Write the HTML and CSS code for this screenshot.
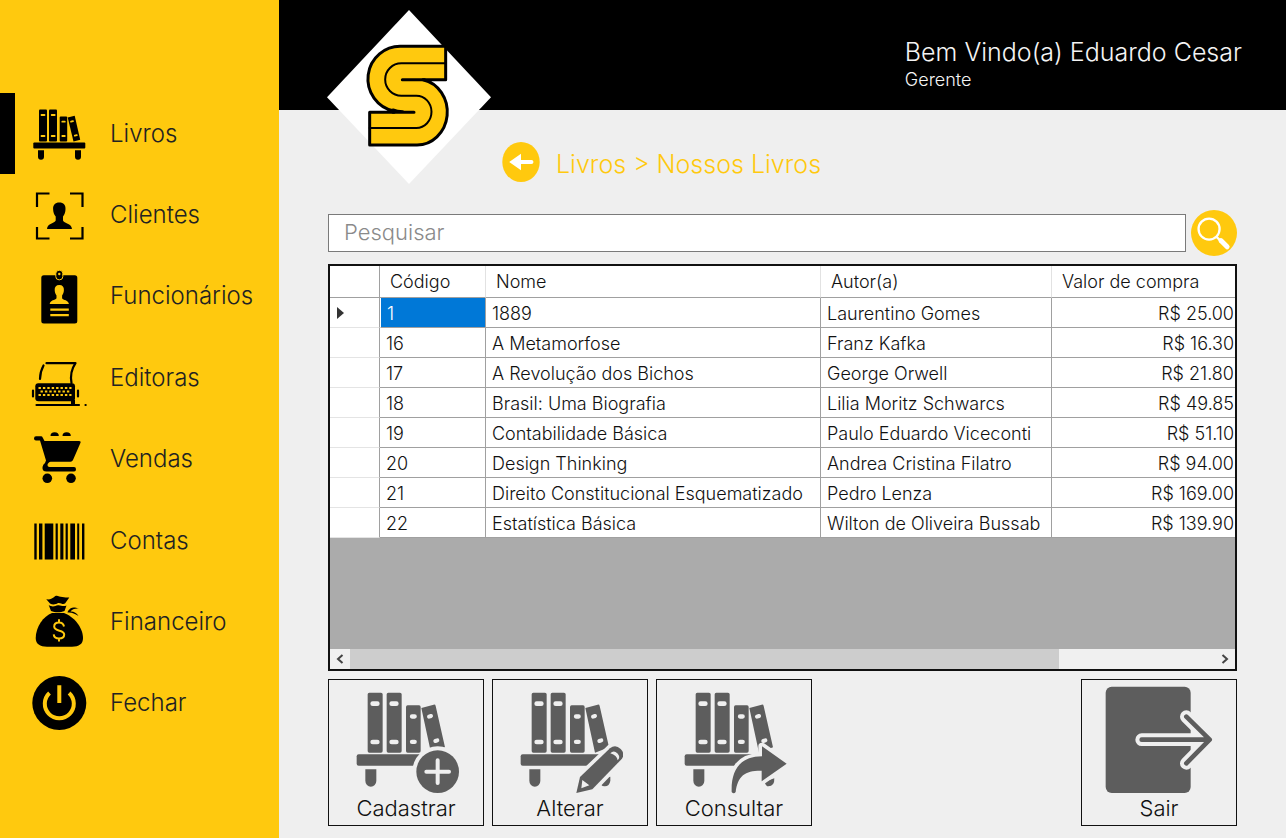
FILE: index.html
```html
<!DOCTYPE html>
<html lang="pt-BR">
<head>
<meta charset="utf-8">
<title>Nossos Livros</title>
<meta name="viewport" content="width=device-width, initial-scale=1">
<link rel="stylesheet" href="styles.css">
</head>
<body>
<svg class="defs" width="0" height="0" aria-hidden="true">
  <defs>
    <g id="big-books">
      <path fill-rule="evenodd" d="M147 158h35q5 0 5 5v170q0 5-5 5h-35q-5 0-5-5V163q0-5 5-5zm10 26a7 7 0 0 0 0 14h14a7 7 0 0 0 0-14zm0 115a7 7 0 0 0 0 14h14a7 7 0 0 0 0-14z"/>
      <path fill-rule="evenodd" d="M204 158h35q5 0 5 5v170q0 5-5 5h-35q-5 0-5-5V163q0-5 5-5zm10 26a7 7 0 0 0 0 14h14a7 7 0 0 0 0-14zm0 115a7 7 0 0 0 0 14h14a7 7 0 0 0 0-14z"/>
      <path fill-rule="evenodd" d="M262 196h34q5 0 5 5v132q0 5-5 5h-34q-5 0-5-5V201q0-5 5-5zm13 27a6 6 0 0 0 0 13h8a6 6 0 0 0 0-13zm0 76a6 6 0 0 0 0 13h8a6 6 0 0 0 0-13z"/>
      <path d="M303 204l37-10q5-1 6 4l28 124-42 16z"/>
      <path class="cut-line" d="M326 230l6-2M345 303l6-2"/>
    </g>
    <g id="big-leg"><path d="M135 388h33v34a16 18 0 0 1-33 0z"/></g>
  </defs>
</svg>
<div class="app">
  <aside class="sidebar">
    <nav class="menu" aria-label="Menu principal">
      <a class="item active" href="#livros">
        <svg class="icon" viewBox="0 0 56 56" aria-hidden="true">
          <rect x="7" y="3.500" width="8" height="32" rx="1"/><rect x="17" y="3.500" width="8" height="32" rx="1"/><rect x="27.700" y="10.500" width="7.500" height="25" rx="1"/>
          <path d="M35.700 11.600l7-1.800L48.200 33.800l-6.700 1.800z"/>
          <path class="hole" d="M9.500 9h3M9.500 30h3M19.700 9h3M19.700 30h3M30.300 15.700h2.500M30.300 30h2.500M39 15.700l2-.5M42.800 29.700l2-.5"/>
          <rect x="1.300" y="36.600" width="52" height="6" rx="1"/>
          <path d="M6 44.300h6v6.500a3 3 0 0 1-6 0zM43 44.300h6v6.500a3 3 0 0 1-6 0z"/>
        </svg><span>Livros</span></a>
      <a class="item" href="#clientes">
        <svg class="icon" viewBox="0 0 56 56" aria-hidden="true">
          <path class="line" d="M17.500 6.500H5v13.500M38 6.500h12.500v13.500M17.500 51.500H5V40M38 51.500h12.500V40"/>
          <path d="M27.300 15.500c4.300 0 6.400 2.500 6.200 6.500 0 3-1 5.500-2.500 7.500v4c1 3 8.500 2.500 9 8.500H15c.5-6 7.500-5.500 8.700-8.500v-4c-1.700-2-2.500-4.500-2.600-7.500-.1-4 2-6.500 6.200-6.500z"/>
        </svg><span>Clientes</span></a>
      <a class="item" href="#funcionarios">
        <svg class="icon" viewBox="0 0 56 56" aria-hidden="true">
          <rect x="9.300" y="7.300" width="36" height="48.300" rx="2.500"/>
          <rect class="badge" x="23.800" y="2.300" width="7" height="9.500" rx="3.200"/><circle class="dot-hole" cx="27.300" cy="6" r="1.200"/>
          <path class="cut" d="M27.300 17c3.300 0 4.800 2 4.600 5 0 2-.7 4-1.800 5.500v2.800c1 2 6.400 1.700 6.800 5.700H17.700c.4-4 5.600-3.700 6.800-5.700v-2.800c-1.100-1.500-1.800-3.500-1.800-5.500-.2-3 1.300-5 4.600-5z"/>
          <path class="cut" d="M18.300 40.500h18.500v2.200H18.300zM18.300 46h18.500v2.200H18.300z"/>
        </svg><span>Funcionários</span></a>
      <a class="item" href="#editoras">
        <svg class="icon" viewBox="0 0 56 56" aria-hidden="true">
          <path class="line round" d="M14.500 13.200H43.500Q37.500 22 39.500 33M11.500 15.500Q8 22 8 29M4.500 55H47M53.500 55h.2M1 40.500v6M46 40.500v6"/>
          <rect x="3.300" y="33.200" width="39.700" height="18" rx="3"/><path d="M39 50h4v5h-4z"/>
          <path class="keys" d="M6.500 38h33M6.500 45h33"/><path class="keys" d="M8.500 41.500h30"/>
        </svg><span>Editoras</span></a>
      <a class="item" href="#vendas">
        <svg class="icon" viewBox="0 0 56 56" aria-hidden="true">
          <path d="M18.500 5a4 3.500 0 0 1 8.300 0zM30.500 5a4 3.500 0 0 1 8.300 0z"/>
          <path d="M4 5.300h5q1.200 0 1.800 1.400L12.500 10H47q2.300 0 1.400 2L41 29q-.7 1.700-2.500 1.700H18.500q-3 1-3 3.500 0 1.800 2 1.800H42q2 0 2 2.300T42 40.500H14.500q-4.500 0-4-4.500.4-2.300 2.500-4l1-2.500-6-20H4q-2 0-2-2.100t2-2.100z"/>
          <circle cx="15.300" cy="47.300" r="4.800"/><circle cx="39" cy="47.300" r="4.800"/>
        </svg><span>Vendas</span></a>
      <a class="item" href="#contas">
        <svg class="icon" viewBox="0 0 56 56" aria-hidden="true">
          <path d="M2.300 10.400h2.400v36H2.300zM7 10.400h3.400v36H7zM12.700 10.400h8.600v36h-8.600zM23.600 10.400h2.200v36h-2.200zM28.300 10.400h3.100v36h-3.100zM33.600 10.400h2.200v36h-2.200zM38.300 10.400h4.700v36h-4.700zM45.200 10.400h2v36h-2zM50 10.400h2.400v36H50z"/>
        </svg><span>Contas</span></a>
      <a class="item" href="#financeiro">
        <svg class="icon" viewBox="0 0 56 56" aria-hidden="true">
          <path d="M20 19h12c9 3 19 14 19 25 0 6-4 8.700-11 8.700H15C8 52.700 3.700 50 3.700 44 3.700 33 11.500 22 20 19z"/>
          <path d="M14.300 5.300c4 .5 6-.7 9-3.300 2.500-1 4 1 7 1 2.500.5 4 .5 7 .5L33 9.500c-2.500 1.500-4-1-7-.5-3 2-6 1.500-8 .5z"/>
          <path d="M16.700 11c4 2.500 6 1 9.300.3 2.500-.5 5 1.700 8.500.2L32.500 17c-4 1.800-9.500 1.800-13.500 0z"/>
          <path d="M36 17c3-4.500 6-4 11-2.500-4-.3-7 .5-8.500 3 3.500-.2 6 1.500 8 4.500-4-2.500-7-4-11-3.500z"/>
          <path class="dollar" d="M32 32.500c-.5-2.500-2-4-5-4s-4.800 1.500-4.800 4c0 5.500 10 3 10 8 0 2.500-2 4-5.200 4s-5-1.700-5.300-4.200M27 25.300v3M27 44.500v3"/>
        </svg><span>Financeiro</span></a>
      <a class="item" href="#fechar">
        <svg class="icon" viewBox="0 0 56 56" aria-hidden="true">
          <circle cx="27.300" cy="28" r="27"/>
          <path class="power" d="M17.500 18a14.500 14.500 0 1 0 19.600 0M27.300 10.300V28"/>
        </svg><span>Fechar</span></a>
    </nav>
  </aside>

  <div class="main">
    <header class="top">
      <svg class="logo" viewBox="52 28 492 522" role="img" aria-label="Logotipo">
        <path fill="#fff" d="M298 28l246 262-246 260L52 290z"/>
        <path class="mark" d="M408 137H277A97 98 0 0 0 253 331L253 335H180V433H320A91 99 0 0 0 340 237H408Z"/>
        <path class="mark bare" d="M278 237H345M313 335H250M250 328Q262 333 280 333"/>
        <path class="mark thin" d="M408 188H275A48 48 0 0 0 275 285H320A45 48 0 0 1 320 382H180"/>
      </svg>
      <div class="welcome">
        <p class="name">Bem Vindo(a) Eduardo Cesar</p>
        <p class="role">Gerente</p>
      </div>
    </header>

    <main class="content">
      <div class="heading">
        <button class="round-btn" type="button" aria-label="Voltar">
          <svg class="back" viewBox="576 426 114 122" aria-hidden="true">
            <ellipse fill="#ffc90e" cx="633" cy="487" rx="57" ry="61"/>
            <path fill="#fff" d="M597 487l36-25v19h32q6 0 6 6t-6 6h-32v19z"/>
          </svg>
        </button>
        <h1>Livros &gt; Nossos Livros</h1>
      </div>

      <form class="search">
        <input type="search" placeholder="Pesquisar" aria-label="Pesquisar">
        <button class="round-btn" type="button" aria-label="Buscar">
          <svg class="find" viewBox="513 29 140 140" aria-hidden="true">
            <circle fill="#ffc90e" cx="583" cy="99" r="70"/>
            <circle fill="none" stroke="#fff" stroke-width="7" cx="568" cy="87" r="32"/>
            <path stroke="#fff" stroke-width="7" d="M590 110l12 12"/>
            <path stroke="#fff" stroke-width="15" stroke-linecap="round" d="M604 122l19 19"/>
          </svg>
        </button>
      </form>

      <section class="grid" aria-label="Livros cadastrados">
        <div class="view">
          <table>
            <colgroup><col class="c-mark"><col class="c-code"><col class="c-name"><col class="c-author"><col></colgroup>
            <thead><tr><th></th><th scope="col">Código</th><th scope="col">Nome</th><th scope="col">Autor(a)</th><th scope="col">Valor de compra</th></tr></thead>
            <tbody>
              <tr><td class="mark-cell"><svg class="pointer" viewBox="0 0 7 12" aria-label="Linha atual"><path d="M0 0l7 6-7 6z"/></svg></td><td class="selected">1</td><td>1889</td><td>Laurentino Gomes</td><td class="money">R$ 25.00</td></tr>
              <tr><td class="mark-cell"></td><td>16</td><td>A Metamorfose</td><td>Franz Kafka</td><td class="money">R$ 16.30</td></tr>
              <tr><td class="mark-cell"></td><td>17</td><td>A Revolução dos Bichos</td><td>George Orwell</td><td class="money">R$ 21.80</td></tr>
              <tr><td class="mark-cell"></td><td>18</td><td>Brasil: Uma Biografia</td><td>Lilia Moritz Schwarcs</td><td class="money">R$ 49.85</td></tr>
              <tr><td class="mark-cell"></td><td>19</td><td>Contabilidade Básica</td><td>Paulo Eduardo Viceconti</td><td class="money">R$ 51.10</td></tr>
              <tr><td class="mark-cell"></td><td>20</td><td>Design Thinking</td><td>Andrea Cristina Filatro</td><td class="money">R$ 94.00</td></tr>
              <tr><td class="mark-cell"></td><td>21</td><td>Direito Constitucional Esquematizado</td><td>Pedro Lenza</td><td class="money">R$ 169.00</td></tr>
              <tr><td class="mark-cell"></td><td>22</td><td>Estatística Básica</td><td>Wilton de Oliveira Bussab</td><td class="money">R$ 139.90</td></tr>
            </tbody>
          </table>
        </div>
        <div class="scroll">
          <button type="button" aria-label="Rolar para a esquerda"><svg viewBox="0 0 8 10" aria-hidden="true"><path d="M6.500 1L2 5l4.500 4"/></svg></button>
          <div class="track"><div class="thumb"></div></div>
          <button type="button" aria-label="Rolar para a direita"><svg viewBox="0 0 8 10" aria-hidden="true"><path d="M1.500 1L6 5 1.500 9"/></svg></button>
        </div>
      </section>

      <div class="actions">
        <button class="action" type="button">
          <svg class="art" viewBox="98 156 318 306" aria-hidden="true">
            <use href="#big-books"/><use href="#big-leg"/>
            <rect x="109" y="343" width="230" height="34" rx="6"/>
            <circle class="gap" cx="352" cy="395" r="76"/><circle cx="352" cy="395" r="64"/>
            <path class="cut-line" d="M352 361v68M318 395h68"/>
          </svg>Cadastrar</button>
        <button class="action" type="button">
          <svg class="art" viewBox="98 156 318 306" aria-hidden="true">
            <use href="#big-books"/><use href="#big-leg"/>
            <rect x="109" y="343" width="240" height="34" rx="6"/>
            <path d="M348 410h30v12q-3 18-18 17-12-2-12-14z"/>
            <path class="gap outline" d="M276 459l11-48 90-86q16-14 32 2t1 32l-86 89z"/>
            <path d="M276 459l11-48 90-86q16-14 32 2t1 32l-86 89z"/>
            <path class="gap" d="M378 340q10-11 21 0t1 21q-2-15-22-21zM294 420l21 16-24 9z"/>
          </svg>Alterar</button>
        <button class="action" type="button">
          <svg class="art" viewBox="98 156 318 306" aria-hidden="true">
            <use href="#big-books"/><use href="#big-leg"/>
            <rect x="109" y="343" width="230" height="34" rx="6"/>
            <path d="M348 425l30-10q1 24-18 24-7 0-12-14z"/>
            <path class="gap outline" d="M250 456c-2-66 24-106 91-107v-30l74 52-75 53v-32c-48-1-72 14-78 64q-6 8-12 0z"/>
            <path d="M250 456c-2-66 24-106 91-107v-30l74 52-75 53v-32c-48-1-72 14-78 64q-6 8-12 0z"/>
          </svg>Consultar</button>
        <button class="action exit" type="button">
          <svg class="art tall" viewBox="136 138 324 324" aria-hidden="true">
            <rect x="138" y="140" width="255" height="319" rx="18"/>
            <path class="arrow-edge" d="M246 299H448M380 230l70 69-70 71"/>
            <path class="arrow" d="M246 299H448M380 230l70 69-70 71"/>
          </svg>Sair</button>
      </div>
    </main>
  </div>
</div>
</body>
</html>
```
FILE: styles.css
```css
* { box-sizing: border-box; }
body {
  margin: 0;
  background: #efefef;
  color: #111;
  font-family: "Century Gothic", Inter, "Liberation Sans", sans-serif;
  font-weight: 300;
}
button { padding: 0; border: 0; background: none; color: inherit; font: inherit; cursor: pointer; }
svg { display: block; flex: none; }
h1, p { margin: 0; font-weight: 300; }
.defs { position: absolute; }

.app { display: flex; min-height: 100vh; }

.sidebar { flex: none; display: flex; width: 279px; background: #ffc90e; }
.menu { flex: 1; display: flex; flex-direction: column; padding: 93px 0 94px; }
.item {
  flex: 1;
  display: flex;
  align-items: center;
  gap: 22px;
  padding-left: 17px;
  border-left: 15px solid transparent;
  color: #222;
  font-size: 24px;
  line-height: 32px;
  text-decoration: none;
}
.item.active { border-left-color: #000; }
.icon { width: 56px; height: 56px; overflow: visible; fill: #000; }
.icon .line { fill: none; stroke: #000; stroke-width: 2.2; }
.icon .round { stroke-linecap: round; stroke-linejoin: round; }
.icon .hole { fill: none; stroke: #ffc90e; stroke-width: 1.8; stroke-linecap: round; }
.icon .cut { fill: #ffc90e; }
.icon .badge { stroke: #ffc90e; stroke-width: 1; }
.icon .dot-hole { fill: #ffc90e; }
.icon .keys { fill: none; stroke: #ffc90e; stroke-width: 2; stroke-dasharray: 2.400 2; }
.icon .dollar { fill: none; stroke: #ffc90e; stroke-width: 2; }
.icon .power { fill: none; stroke: #ffc90e; stroke-width: 4; }

.main { flex: 1; min-width: 0; display: flex; flex-direction: column; }
.top { position: relative; display: flex; justify-content: flex-end; height: 110px; padding: 36px 44px 0; background: #000; color: #f4f4f4; }
.logo { position: absolute; left: 48px; top: 10px; width: 164px; height: 174px; }
.mark { fill: #ffc90e; stroke: #000; stroke-width: 9; stroke-linejoin: round; stroke-linecap: round; }
.mark.bare { fill: none; }
.mark.thin { fill: none; stroke-width: 6; }
.welcome .name { font-size: 25px; line-height: 32px; }
.welcome .role { font-size: 18px; line-height: 24px; }

.content { flex: 1; display: flex; flex-direction: column; padding: 32px 49px 12px; }
.heading { display: flex; align-items: center; gap: 16px; padding-left: 174px; color: #ffc90e; }
.heading h1 { padding-top: 4px; font-size: 25px; line-height: 36px; }
.back { width: 38px; height: 40px; }

.search { display: flex; align-items: center; gap: 5px; margin-top: 28px; }
.search input {
  flex: 1;
  min-width: 0;
  height: 38px;
  padding: 0 15px 3px;
  border: 1px solid #7a7a7a;
  border-radius: 0;
  background: #fff;
  color: #111;
  font: inherit;
  font-size: 22px;
  appearance: none;
}
.search input::placeholder { color: #8a8a8a; opacity: 1; }
.find { width: 46px; height: 46px; }

.grid { flex: 1; display: flex; flex-direction: column; margin: 8px 0; border: 2px solid #111; background: #ababab; }
.view { flex: 1; overflow: hidden; }
table { width: 100%; table-layout: fixed; border-collapse: separate; border-spacing: 0; background: #fff; font-size: 18px; line-height: 20px; }
.c-mark { width: 50px; }
.c-code { width: 106px; }
.c-name { width: 335px; }
.c-author { width: 231px; }
th, td { height: 30px; border-right: 1px solid #a0a0a0; border-bottom: 1px solid #a0a0a0; font-weight: 300; text-align: left; white-space: nowrap; }
th { height: 32px; padding: 0 10px; border-right-color: #e2e2e2; }
th:first-child { border-right-color: #a0a0a0; }
td { padding: 3px 6px 0; }
th:last-child, td:last-child { border-right: 0; }
td.mark-cell { padding: 0 7px; border-bottom-color: #e4e4e4; }
td.selected { border-left: 1px solid #fff; background: #0078d7; color: #fff; }
td.money { padding-right: 1px; text-align: right; }
.pointer { width: 7px; height: 12px; fill: #333; }

.scroll { display: flex; height: 20px; background: #f0f0f0; }
.scroll button { display: flex; align-items: center; justify-content: center; width: 20px; }
.scroll svg { width: 8px; height: 10px; fill: none; stroke: #444; stroke-width: 2; }
.track { flex: 1; display: flex; }
.thumb { width: 82%; background: #cdcdcd; }

.actions { display: flex; gap: 8px; }
.action {
  display: flex;
  flex-direction: column;
  align-items: center;
  justify-content: flex-end;
  width: 156px;
  height: 147px;
  padding-bottom: 3px;
  border: 1px solid #111;
  font-size: 22px;
  line-height: 28px;
}
.exit { margin-left: auto; }
.art { width: 106px; height: 102px; fill: #5d5d5d; }
.art.tall { width: 108px; height: 108px; }
.gap { fill: #efefef; }
.gap.outline { stroke: #efefef; stroke-width: 22; stroke-linejoin: round; }
.cut-line { fill: none; stroke: #efefef; stroke-width: 12; stroke-linecap: round; }
.arrow, .arrow-edge { fill: none; stroke-linecap: round; stroke-linejoin: round; }
.arrow-edge { stroke: #efefef; stroke-width: 38; }
.arrow { stroke: #5d5d5d; stroke-width: 14; }
```
